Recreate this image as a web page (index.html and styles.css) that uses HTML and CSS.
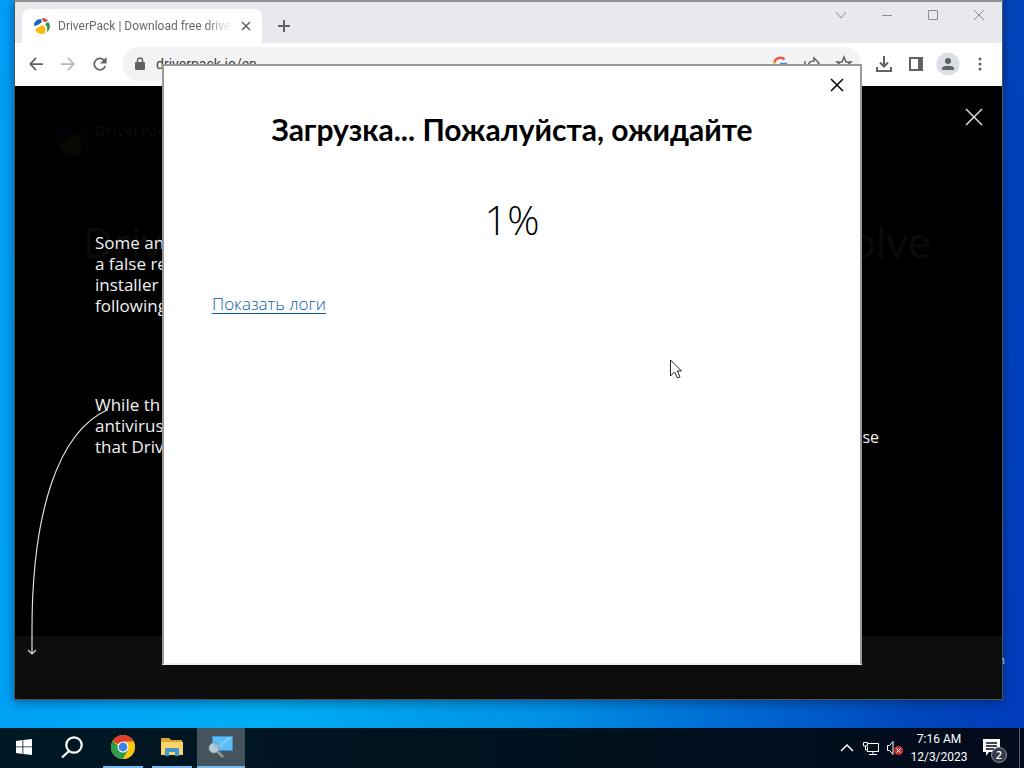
FILE: index.html
```
<!DOCTYPE html>
<html lang="ru">
<head>
<meta charset="utf-8">
<title>Загрузка</title>
<link rel="stylesheet" href="styles.css">
</head>
<body>
<main class="desktop">
  <section class="browser" lang="en">
    <header class="tabstrip">
      <div class="tab">
        <svg class="favicon" viewBox="0 0 16 16"><path fill="#1769b5" d="M0 7C0 4 3 1 7 1l1 3-4 3-4 1z"/><path fill="#e03c31" d="M8 0c3 0 5 1 6 3l-4 1-2-3z"/><path fill="#269447" d="M14 4c3 3 2 8-1 10 0-3 1-5-2-8z"/><path fill="#fbb80f" d="M1 11l8-4c3 2 3 5 2 8-3 2-8 1-10-4z"/></svg>
        <span class="tab-title">DriverPack | Download free drive</span>
        <button class="icon-btn tab-close" aria-label="Close tab"><svg viewBox="0 0 10 10"><path d="M1 1l8 8M9 1L1 9"/></svg></button>
      </div>
      <button class="icon-btn new-tab" aria-label="New tab"><svg viewBox="0 0 12 12"><path d="M6 0v12M0 6h12"/></svg></button>
      <div class="captions">
        <button class="icon-btn" aria-label="Search tabs"><svg viewBox="0 0 12 12"><path d="M1 3l5 6 5-6"/></svg></button>
        <button class="icon-btn" aria-label="Minimize"><svg viewBox="0 0 12 12"><path d="M1 6.500h10"/></svg></button>
        <button class="icon-btn" aria-label="Maximize"><svg viewBox="0 0 12 12"><path d="M1.500 1.500h9v9h-9z"/></svg></button>
        <button class="icon-btn" aria-label="Close"><svg viewBox="0 0 12 12"><path d="M1 1l10 10M11 1L1 11"/></svg></button>
      </div>
    </header>
    <div class="toolbar">
      <button class="icon-btn nav" aria-label="Back"><svg viewBox="0 0 16 16"><path d="M16 8H2M8 1L1.500 8 8 15"/></svg></button>
      <button class="icon-btn nav off" aria-label="Forward"><svg viewBox="0 0 16 16"><path d="M0 8h14M8 1l6.500 7L8 15"/></svg></button>
      <button class="icon-btn nav" aria-label="Reload"><svg viewBox="0 0 16 16"><path d="M14 10.500A6.500 6.500 0 1 1 12.500 3.500L14 5"/><path class="solid" d="M15.500 0v7.500H8z"/></svg></button>
      <div class="omnibox">
        <svg class="lock" viewBox="0 0 10 14"><path fill="#5f6368" d="M1 5h8q1 0 1 1v6q0 1-1 1H1q-1 0-1-1V6q0-1 1-1z"/><path fill="none" stroke="#5f6368" stroke-width="1.500" d="M2.500 5V3.500a2.500 2.500 0 0 1 5 0V5"/></svg>
        <input class="url" type="text" value="driverpack.io/en" aria-label="Address">
        <button class="icon-btn" aria-label="Google"><svg viewBox="0 0 16 16"><path stroke="#e8553e" stroke-width="2.500" d="M2.500 6a6 6 0 0 1 10-2.500"/><path stroke="#f9bc16" stroke-width="2.500" d="M2.500 6v4"/><path stroke="#35a854" stroke-width="2.500" d="M2.500 10a6 6 0 0 0 9 3"/><path stroke="#4b86e8" stroke-width="2.500" d="M8 8h6a6 6 0 0 1-2.500 5"/></svg></button>
        <button class="icon-btn" aria-label="Share"><svg viewBox="0 0 16 16"><path d="M1 5v10h12v-3M4 11c0-5 3-6 6-6V2l5 5-5 5V9c-3 0-4 0-6 2z"/></svg></button>
        <button class="icon-btn" aria-label="Bookmark"><svg viewBox="0 0 16 16"><path d="M8 1l2 5h5l-4 3.500L12.500 15 8 12l-4.500 3L5 9.500 1 6h5z"/></svg></button>
      </div>
      <div class="actions">
        <button class="icon-btn" aria-label="Downloads"><svg viewBox="0 0 16 16"><path stroke-width="2" d="M8 0v10M4 6.500L8 10.500l4-4M1 11v4h14v-4"/></svg></button>
        <button class="icon-btn" aria-label="Side panel"><svg viewBox="0 0 16 16"><path stroke-width="2" d="M2 2h12v12H2z"/><path class="solid" d="M10 2h4v12h-4z"/></svg></button>
        <button class="icon-btn avatar" aria-label="Profile"><svg viewBox="0 0 16 16"><circle class="solid" cx="8" cy="5" r="3"/><path class="solid" d="M2 14v-2c1-3 11-3 12 0v2z"/></svg></button>
        <button class="icon-btn" aria-label="Menu"><svg viewBox="0 0 16 16"><circle class="solid" cx="8" cy="3" r="1.500"/><circle class="solid" cx="8" cy="8" r="1.500"/><circle class="solid" cx="8" cy="13" r="1.500"/></svg></button>
      </div>
    </div>
    <div class="page">
      <div class="backdrop">
        <div class="brand"><svg viewBox="0 0 16 16"><path fill="#010308" d="M0 7C0 4 3 1 6 1l1 3-3 4-3 1z"/><path fill="#090902" d="M2 11l7-5c3 2 3 6 2 9-3 2-8 0-9-4z"/><path fill="#010401" d="M14 4c3 3 2 8-1 10 0-3 1-5-2-8z"/></svg><span>DriverPack</span></div>
        <div class="hero"><span>Driv</span><span>olve</span></div>
        <div class="page-footer"><span class="edge-text">n</span></div>
      </div>
      <div class="overlay">
        <div class="notes">
          <p class="note">Some an<br>a false re<br>installer<br>following</p>
          <p class="note">While th<br>antivirus<br>that Driv</p>
        </div>
        <p class="note note-right">se</p>
        <button class="icon-btn overlay-close" aria-label="Close message"><svg viewBox="0 0 16 16"><path d="M0 0l16 16M16 0L0 16"/></svg></button>
        <svg class="arrow" viewBox="0 0 90 250"><path d="M80 3C32 25 5 103 5 223v24M1 243l4 4 4-4"/></svg>
      </div>
    </div>
  </section>

  <section class="dialog" role="dialog" aria-labelledby="dlg-title">
    <button class="icon-btn dialog-close" aria-label="Закрыть"><svg viewBox="0 0 12 12"><path d="M0 0l12 12M12 0L0 12"/></svg></button>
    <h1 id="dlg-title">Загрузка... Пожалуйста, ожидайте</h1>
    <p class="percent">1%</p>
    <a class="logs" href="#">Показать логи</a>
  </section>

  <svg class="cursor" viewBox="0 0 12 20"><path fill="#fff" stroke="#222" d="M.5 1v16l4-4 3 6 2.500-1.200L7.300 12H11.500z"/></svg>

  <footer class="taskbar">
    <button class="task" aria-label="Start"><svg width="16" height="16" viewBox="0 0 16 16"><path fill="#fff" d="M0 2l6.500-1v6.500H0zM7.300 1L16 0v7.500H7.300zM0 8.300h6.500V15L0 14zM7.300 8.300H16V16l-8.700-1z"/></svg></button>
    <button class="task" aria-label="Search"><svg width="22" height="22" viewBox="0 0 22 22"><g fill="none" stroke="#fff" stroke-width="2.200"><circle cx="13" cy="9" r="7.700"/><path d="M8 15l-7 6.500"/></g></svg></button>
    <button class="task running" aria-label="Google Chrome"><svg width="24" height="24" viewBox="0 0 24 24"><circle cx="12" cy="12" r="12" fill="#fbc60c"/><path fill="#df3d2f" d="M12 12L1.600 6A12 12 0 0 1 22.400 6z"/><path fill="#2c9b4b" d="M1.600 6A12 12 0 0 0 12 24l5.200-9H12z"/><path fill="#fbc60c" d="M12 6.600h10.700A12 12 0 0 1 12 24l5-9z"/><circle cx="12" cy="12" r="5.500" fill="#fff"/><circle cx="12" cy="12" r="4.400" fill="#3f7fe8"/></svg></button>
    <button class="task running" aria-label="File Explorer"><svg width="22" height="18" viewBox="0 0 22 18"><path fill="#dca52e" d="M0 1q0-1 1-1h7l2 2h11v5H0z"/><path fill="#fbd469" d="M0 4h22v13H0z"/><path fill="#3f95cc" d="M4 18v-7q0-1 1-1h12q1 0 1 1v7h-4v-4H8v4z"/></svg></button>
    <button class="task running active" aria-label="Setup"><svg width="26" height="24" viewBox="0 0 26 24"><path fill="#3c96d4" d="M4 1h21v15H4z"/><path fill="#5cbcf4" d="M5 2h19v13H5z"/><path fill="#7accf8" d="M5 15L20 2h4L10 15z"/><path stroke="#8b9298" stroke-width="3" d="M9 16l6 6"/><circle cx="6" cy="13" r="5" fill="#bccbd3" stroke="#8b9ba5"/><path fill="#8fc0dc" d="M6 9a4 4 0 0 1 4 4H6z"/></svg></button>
    <div class="tray">
      <button class="icon-btn" aria-label="Hidden icons"><svg viewBox="0 0 12 12"><path d="M0 9l6-6 6 6"/></svg></button>
      <button class="icon-btn wide" aria-label="Network"><svg viewBox="0 0 16 14"><path d="M5 2.500h10.500v8H4.500V6M10 11v2.500M6 13.500h8M.5 1.500h4V5h-4zM2.500 5v4h2"/></svg></button>
      <button class="icon-btn wide" aria-label="Volume"><svg viewBox="0 0 16 14"><path d="M.5 4.500h2l3.500-4v13l-3.500-4h-2z"/><circle cx="11.500" cy="9.500" r="4.500" fill="#c9302f" stroke="none"/><path d="M9.500 7.500l4 4M13.500 7.500l-4 4"/></svg></button>
      <div class="clock"><span>7:16 AM</span><span>12/3/2023</span></div>
      <button class="notify" aria-label="Notifications"><svg width="18" height="18" viewBox="0 0 18 18"><path fill="#fff" d="M0 0h17v13H6l-3 4v-4H0z"/><path stroke="#030b1c" stroke-width="1.300" d="M3 4h11M3 7h11M3 10h8"/></svg><span class="badge">2</span></button>
    </div>
  </footer>
</main>
</body>
</html>
```
FILE: styles.css
```
* { box-sizing: border-box; }
body { margin: 0; font-family: "Open Sans", "Noto Sans", sans-serif; }
button { margin: 0; padding: 0; border: 0; background: none; font: inherit; color: inherit; }
h1, p { margin: 0; }

.desktop {
  position: relative;
  display: flex;
  flex-direction: column;
  height: 100vh;
  overflow: hidden;
  background: linear-gradient(95deg, #009ff7 0%, #00aef4 30%, #0092e4 55%, #0068d2 74%, #0046ba 90%, #003cbc 100%);
}

.icon-btn {
  display: flex;
  flex: none;
  align-items: center;
  justify-content: center;
  color: #5f6368;
}
.icon-btn svg { display: block; width: 16px; height: 16px; fill: none; stroke: currentColor; stroke-width: 1.500; overflow: visible; }
.icon-btn .solid { fill: currentColor; stroke: none; }

/* Browser window */
.browser {
  flex: 1;
  display: flex;
  flex-direction: column;
  min-height: 0;
  margin: 0 21px 28px 14px;
  border: 1px solid #4b565e;
  border-top-color: #909094;
  border-top-width: 2px;
  box-shadow: 0 2px 10px rgba(0, 20, 60, 0.5);
  background: #fff;
}
.tabstrip { display: flex; align-items: flex-end; height: 41px; padding-left: 7px; background: #e8e9ec; }
.tab { display: flex; align-items: center; width: 240px; height: 34px; padding: 0 10px 0 12px; border-radius: 8px 8px 0 0; background: #fff; }
.favicon { flex: none; width: 16px; height: 16px; margin-right: 8px; }
.tab-title {
  flex: 1;
  overflow: hidden;
  white-space: nowrap;
  font-family: Roboto, sans-serif;
  font-size: 12px;
  color: #66696d;
  -webkit-mask-image: linear-gradient(90deg, #000 85%, transparent);
  mask-image: linear-gradient(90deg, #000 85%, transparent);
}
.tab-close { width: 12px; margin-left: 8px; }
.tab-close svg { width: 10px; height: 10px; }
.new-tab { width: 28px; height: 34px; margin-left: 8px; }
.new-tab svg { width: 12px; height: 12px; stroke-width: 2; }
.captions { display: flex; align-self: flex-start; margin-left: auto; }
.captions .icon-btn { width: 46px; height: 26px; color: #8c8e92; }
.captions svg { width: 12px; height: 12px; stroke-width: 1; }

.toolbar { display: flex; align-items: center; height: 43px; padding: 0 6px 2px 5px; background: #fff; }
.nav { width: 32px; height: 32px; }
.nav svg { width: 14px; height: 14px; stroke-width: 2; }
.nav.off { color: #b6b8bb; }
.omnibox { display: flex; flex: 1; align-items: center; height: 34px; margin-left: 6px; padding: 0 1px 0 13px; border-radius: 17px; background: #f1f3f4; }
.omnibox .icon-btn { width: 32px; height: 32px; }
.lock { flex: none; width: 10px; height: 14px; }
.url { flex: 1; min-width: 0; margin-left: 9px; padding: 0 2px; border: 0; outline: 0; background: none; font: 14px Roboto, sans-serif; color: #3c4043; }
.actions { display: flex; margin-left: 7px; }
.actions .icon-btn { width: 32px; height: 24px; }
.actions .avatar { background: radial-gradient(circle, #dcdfe6 11px, transparent 12px); }

/* Page and its dark overlay */
.page { flex: 1; display: grid; min-height: 0; background: #000; }
.backdrop, .overlay { grid-area: 1 / 1; min-height: 0; }
.backdrop { display: flex; flex-direction: column; color: #0a0a0a; }
.brand { display: flex; align-items: flex-start; gap: 4px; padding: 34px 0 0 40px; font-size: 15px; font-weight: 600; }
.brand svg { width: 36px; height: 36px; }
.hero { display: flex; justify-content: space-between; padding: 56px 71px 0 68px; font-size: 42px; line-height: 60px; color: #0b0b0b; }
.page-footer { display: flex; align-items: flex-start; justify-content: flex-end; height: 63px; margin: auto -3px 0 0; padding-top: 17px; background: linear-gradient(#0d0d0d, #0d0d0d) no-repeat 0 0 / calc(100% - 3px) 100%; }
.edge-text { display: flex; justify-content: flex-end; overflow: hidden; width: 3px; font-size: 11px; line-height: 14px; color: #b8c4dc; }
.overlay { position: relative; display: flex; align-items: flex-start; justify-content: space-between; padding: 0 123px 0 80px; color: #f2f2f2; }
.notes { display: flex; flex-direction: column; gap: 78px; padding-top: 146px; }
.note { font-size: 17px; line-height: 21px; white-space: nowrap; }
.note-right { padding-top: 341px; font-size: 16px; }
.overlay-close { position: absolute; top: 23px; right: 20px; color: #ddd; }
.arrow { position: absolute; left: 12px; top: 321px; width: 90px; height: 250px; fill: none; stroke: #ddd; stroke-width: 1.200; }

/* Installer window */
.dialog {
  position: absolute;
  top: 64px;
  left: 162px;
  right: 162px;
  bottom: 103px;
  display: flex;
  flex-direction: column;
  padding: 13px 48px;
  border: 2px solid #999;
  border-bottom-color: #f0f0f0;
  background: #fff;
  color: #000;
}
.dialog-close { align-self: flex-end; margin-right: -31px; color: #000; }
.dialog-close svg { width: 12px; height: 12px; }
.dialog h1 { margin-top: 18px; font: bold 30px/40px Lato, "Open Sans", sans-serif; text-align: center; white-space: nowrap; }
.percent { margin-top: 41px; font-size: 40px; font-weight: 300; line-height: 60px; text-align: center; }
.logs { align-self: flex-start; margin-top: 42px; font-size: 17px; font-weight: 300; line-height: 24px; color: #0a5ca8; text-underline-offset: 3px; }
.cursor { position: absolute; left: 670px; top: 359px; width: 12px; height: 20px; }

/* Taskbar */
.taskbar { display: flex; align-items: stretch; flex: none; height: 40px; background: linear-gradient(90deg, #001924, #00111e 60%, #020a1c); color: #fff; }
.task { display: flex; align-items: center; justify-content: center; width: 48px; border-bottom: 2px solid transparent; }
.task.running { width: 40px; margin-left: 7px; }
.task.running + .running { margin-left: 9px; }
.running { border-bottom-color: #76b9ed; }
.task.running.active { width: 48px; margin-left: 5px; background: #44535c; }
.tray { display: flex; align-items: center; margin: 0 4px 0 auto; border-right: 1px solid #59616d; }
.tray .icon-btn { width: 24px; height: 40px; color: #fff; }
.tray svg { overflow: visible; }
.tray .icon-btn svg { width: 12px; height: 12px; }
.tray .wide svg { width: 16px; height: 14px; stroke-width: 1; }
.clock { display: flex; flex-direction: column; width: 64px; font: 12px/18px Roboto, sans-serif; text-align: center; white-space: nowrap; }
.notify { position: relative; display: flex; align-items: center; justify-content: center; width: 48px; height: 40px; padding-right: 6px; }
.badge { position: absolute; left: 20px; top: 19px; width: 16px; height: 16px; border: 1px solid #8c929b; border-radius: 50%; background: #343b46; font-size: 11px; font-weight: 600; line-height: 14px; text-align: center; }
```
